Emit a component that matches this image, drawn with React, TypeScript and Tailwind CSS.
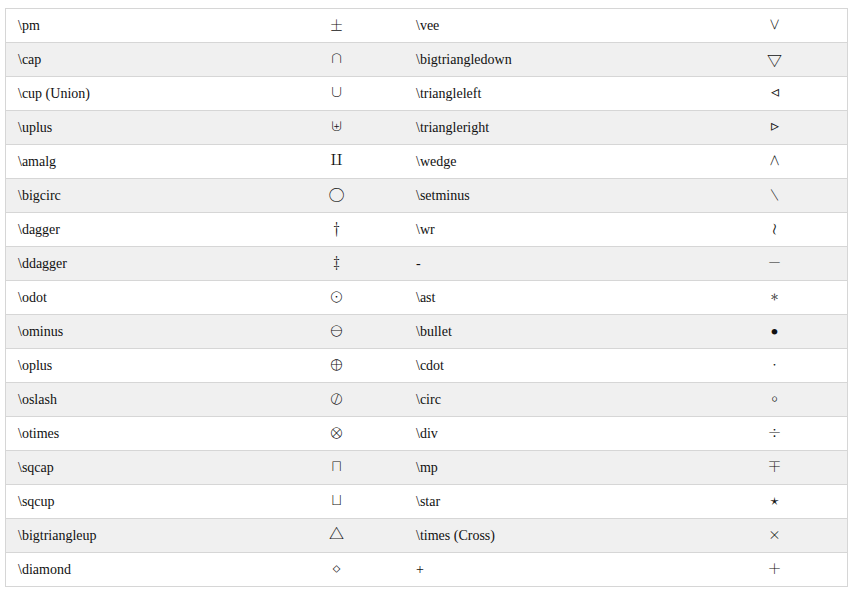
import React from "react";

const rows: [string, string, string, string][] = [
  ["\\pm", "±", "\\vee", "∨"],
  ["\\cap", "∩", "\\bigtriangledown", "▽"],
  ["\\cup (Union)", "∪", "\\triangleleft", "◃"],
  ["\\uplus", "⊎", "\\triangleright", "▹"],
  ["\\amalg", "⨿", "\\wedge", "∧"],
  ["\\bigcirc", "◯", "\\setminus", "∖"],
  ["\\dagger", "†", "\\wr", "≀"],
  ["\\ddagger", "‡", "-", "−"],
  ["\\odot", "⊙", "\\ast", "∗"],
  ["\\ominus", "⊖", "\\bullet", "•"],
  ["\\oplus", "⊕", "\\cdot", "⋅"],
  ["\\oslash", "⊘", "\\circ", "∘"],
  ["\\otimes", "⊗", "\\div", "÷"],
  ["\\sqcap", "⊓", "\\mp", "∓"],
  ["\\sqcup", "⊔", "\\star", "⋆"],
  ["\\bigtriangleup", "△", "\\times (Cross)", "×"],
  ["\\diamond", "⋄", "+", "+"],
];

export default function App() {
  return (
    <div className="bg-white w-[855px] h-[594px] pt-2 pl-[5px] font-['Liberation_Serif',serif]">
      <div className="w-[843px] border-t border-x border-[#d6d6d6] text-[14px] text-[#111]">
        {rows.map((r, i) => (
          <div
            key={i}
            className={`grid grid-cols-[263px_135px_298px_145px] h-[34px] items-center border-b border-[#d6d6d6] ${i % 2 === 1 ? "bg-[#f0f0f0]" : "bg-white"}`}
          >
            <div className="pl-3">{r[0]}</div>
            <div className="text-center text-[16px] leading-none -translate-y-0.5 font-['Latin_Modern_Math',serif]">{r[1]}</div>
            <div className="pl-3">{r[2]}</div>
            {r[3] === "•" ? (
              <div className="text-center text-[24px] leading-none">{r[3]}</div>
            ) : (
              <div className="text-center text-[16px] leading-none -translate-y-0.5 font-['Latin_Modern_Math',serif]">{r[3]}</div>
            )}
          </div>
        ))}
      </div>
    </div>
  );
}
